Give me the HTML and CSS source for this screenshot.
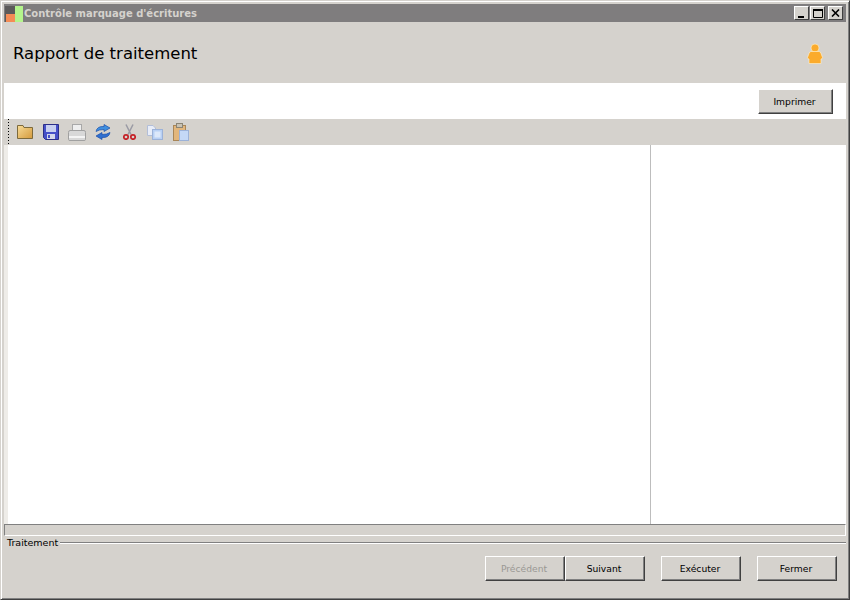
FILE: index.html
```html
<!DOCTYPE html>
<html lang="fr">
  <head>
    <meta charset="UTF-8" />
    <title>Contrôle marquage d'écritures</title>
    <link rel="stylesheet" href="styles.css">
  </head>
  <body>
    <div class="window">
      <div class="titlebar">
        <svg class="app_icon" width="18" height="16" viewBox="0 0 18 16">
          <rect x="0" y="0" width="18" height="16" fill="#5c5a5a" />
          <rect x="1" y="8" width="9" height="8" fill="#f58c55" />
          <rect x="10" y="0" width="8" height="16" fill="#b4f58c" />
        </svg>
        <span class="title_text">Contrôle marquage d'écritures</span>
        <div class="win_btns">
          <button class="win_btn"><svg width="9" height="9" viewBox="0 0 9 9"><rect x="1" y="7" width="6" height="2" fill="#000" /></svg></button>
          <button class="win_btn max"><svg width="10" height="9" viewBox="0 0 10 9"><path d="M0.5 1.5H9.5V8.5H0.5Z" fill="none" stroke="#000" /><rect x="0" y="0" width="10" height="2" fill="#000" /></svg></button>
          <button class="win_btn close"><svg width="9" height="8" viewBox="0 0 9 8"><path d="M1 0.5L8 7.5M8 0.5L1 7.5" fill="none" stroke="#000" stroke-width="1.6" /></svg></button>
        </div>
      </div>

      <div class="header">
        <h1 class="heading">Rapport de traitement</h1>
        <svg class="person" width="18" height="22" viewBox="0 0 18 22">
          <circle cx="9" cy="5" r="4" fill="#fbab2c" stroke="#fff3d0" stroke-width="0.6" />
          <path d="M5 8.5H13Q14.5 8.5 15 10.5L16.5 14.5Q16.5 16 15 16V20.5H3V16Q1.5 16 1.5 14.5L3 10.5Q3.5 8.5 5 8.5Z" fill="#fbab2c" stroke="#fff3d0" stroke-width="0.6" />
        </svg>
      </div>

      <div class="print_bar">
        <button class="btn print">Imprimer</button>
      </div>

      <div class="toolbar">
        <span class="grip"></span>
        <span class="tool">
          <svg width="16" height="14" viewBox="0 0 16 14">
            <defs>
              <linearGradient id="folderFill" x1="0" y1="0" x2="1" y2="1">
                <stop offset="0" stop-color="#f8dc98" />
                <stop offset="1" stop-color="#d49a3c" />
              </linearGradient>
            </defs>
            <path d="M0.5 0.5H6L7 2.5H15.5V13.5H0.5Z" fill="url(#folderFill)" stroke="#7d6a3c" />
          </svg>
        </span>
        <span class="tool">
          <svg width="16" height="16" viewBox="0 0 16 16">
            <path d="M0.5 0.5H15.5V15.5H2.5L0.5 13.5Z" fill="#4650c8" stroke="#2c2f88" />
            <rect x="3" y="1" width="10" height="7" fill="#c8d0f0" />
            <rect x="4" y="10" width="8" height="5" fill="#d4d8ea" />
            <rect x="5" y="11" width="2" height="3" fill="#4650c8" />
          </svg>
        </span>
        <span class="tool">
          <svg width="18" height="17" viewBox="0 0 18 17">
            <rect x="4.5" y="0.5" width="9" height="6" fill="#eeeeee" stroke="#a8a8a8" />
            <path d="M2 6.5H16Q17.5 6.5 17.5 8.5V15.5Q17.5 16.5 16 16.500H2Q0.5 16.5 0.5 15.5V8.5Q0.5 6.5 2 6.5Z" fill="#d8d8d8" stroke="#a0a0a0" />
            <rect x="1" y="12" width="16" height="2" fill="#f4f4f4" />
          </svg>
        </span>
        <span class="tool">
          <svg width="18" height="16" viewBox="0 0 18 16">
            <path d="M2 7.5Q3 2 10 2.5V0.5L16 4L10 7.5V5.5Q5 5.5 2 7.5Z" fill="#3f8fe0" stroke="#1d4fa8" stroke-width="0.7" />
            <path d="M16 8.5Q15 14 8 13.5V15.5L2 12L8 8.5V10.5Q13 10.5 16 8.5Z" fill="#2f6fd0" stroke="#1d4fa8" stroke-width="0.7" />
          </svg>
        </span>
        <span class="tool">
          <svg width="13" height="16" viewBox="0 0 13 16">
            <path d="M3 0.5L8 10.5M10 0.5L5 10.5" fill="none" stroke="#9a9aa4" stroke-width="1.5" />
            <circle cx="3" cy="13" r="2.2" fill="none" stroke="#c42026" stroke-width="1.7" />
            <circle cx="10" cy="13" r="2.2" fill="none" stroke="#c42026" stroke-width="1.7" />
          </svg>
        </span>
        <span class="tool">
          <svg width="16" height="15" viewBox="0 0 16 15">
            <path d="M0.5 0.5H6L8.5 3V10.5H0.5Z" fill="#e8edf8" stroke="#b2bed8" />
            <rect x="5.5" y="4.5" width="10" height="10" fill="#b8d0f4" stroke="#9cb2d8" />
            <rect x="7.5" y="6.5" width="6" height="6" fill="#dce8fa" />
          </svg>
        </span>
        <span class="tool">
          <svg width="16" height="18" viewBox="0 0 16 18">
            <rect x="0.5" y="2.5" width="12" height="15" fill="#e2b67c" stroke="#a88658" />
            <rect x="3.5" y="0.5" width="6" height="4" fill="#c8c2b4" stroke="#8a8474" />
            <rect x="6.5" y="7.5" width="9" height="10" fill="#c4d8f6" stroke="#9cb2d8" />
          </svg>
        </span>
      </div>

      <div class="content">
        <div class="left_strip"></div>
        <div class="main_pane"></div>
        <div class="side_pane"></div>
      </div>

      <div class="status"></div>

      <div class="group">
        <div class="legend">
          <span>Traitement</span>
          <span class="legend_line"></span>
        </div>
        <div class="actions">
          <div class="btn_pair">
            <button class="btn" disabled>Précédent</button>
            <button class="btn">Suivant</button>
          </div>
          <button class="btn">Exécuter</button>
          <button class="btn">Fermer</button>
        </div>
      </div>
    </div>
  </body>
</html>
```

FILE: styles.css
```css
* {
  margin: 0;
  padding: 0;
  box-sizing: border-box;
}

body {
  width: 850px;
  height: 600px;
  overflow: hidden;
  background-color: #d5d2cd;
  font-family: "DejaVu Sans", Verdana, sans-serif;
  font-size: 9.5px;
  color: #000;
}

.window {
  display: flex;
  flex-direction: column;
  width: 850px;
  height: 600px;
  padding: 3px 3px 0 3px;
  border-top: 1px solid #d5d2cd;
  border-left: 1px solid #d5d2cd;
  border-right: 1px solid #404040;
  border-bottom: 1px solid #404040;
  box-shadow: inset 1px 1px 0 #fff, inset -1px -1px 0 #808080;
}

.titlebar {
  display: flex;
  align-items: center;
  flex: 0 0 18px;
  background-color: #7f7d7e;
}

.app_icon {
  margin: 1px 1px 0 1px;
}

.title_text {
  font-size: 10px;
  font-weight: bold;
  color: #d5d2cd;
}

.win_btns {
  display: flex;
  margin-left: auto;
  margin-right: 3px;
}

.win_btn {
  display: flex;
  align-items: center;
  justify-content: center;
  width: 15px;
  height: 14px;
  background-color: #d5d2cd;
  border: 1px solid;
  border-color: #fff #404040 #404040 #fff;
}

.win_btn.max {
  margin-left: 1px;
}

.win_btn.close {
  margin-left: 3px;
}

.header {
  display: flex;
  align-items: center;
  justify-content: space-between;
  flex: 0 0 61px;
  padding: 2px 22px 0 9px;
}

.heading {
  font-size: 16.5px;
  font-weight: normal;
}

.print_bar {
  display: flex;
  justify-content: flex-end;
  flex: 0 0 36px;
  padding: 6px 13px 0 0;
  background-color: #fff;
}

.btn {
  width: 80px;
  height: 25px;
  padding-right: 2px;
  background-color: #d5d2cd;
  border: 1px solid;
  border-color: #fff #404040 #404040 #fff;
  box-shadow: inset -1px -1px 0 #808080;
  font-family: "DejaVu Sans", Verdana, sans-serif;
  font-size: 9.2px;
  color: #000;
}

.btn:disabled {
  color: #9a9894;
}

.btn.print {
  width: 75px;
}

.toolbar {
  display: flex;
  align-items: center;
  flex: 0 0 26px;
  padding-left: 4px;
  background-color: #d5d2cd;
}

.grip {
  align-self: stretch;
  width: 1px;
  margin-right: 3px;
  background-image: repeating-linear-gradient(#000 0 1px, transparent 1px 3px);
}

.tool {
  display: flex;
  align-items: center;
  justify-content: center;
  width: 26px;
}

.content {
  display: flex;
  flex: 0 0 379px;
  background-color: #fff;
}

.left_strip {
  flex: 0 0 4px;
  background-color: #eeece8;
}

.main_pane {
  flex: 0 0 643px;
  border-right: 1px solid #bdbdbd;
}

.side_pane {
  flex: 1;
}

.status {
  flex: 0 0 12px;
  background-color: #d5d2cd;
  border: 1px solid;
  border-color: #808080 #fff #fff #808080;
}

.legend {
  display: flex;
  align-items: center;
  gap: 2px;
  height: 13px;
  padding-left: 3px;
}

.legend_line {
  flex: 1;
  height: 2px;
  background-color: #808080;
  border-bottom: 1px solid #fff;
}

.actions {
  display: flex;
  justify-content: flex-end;
  gap: 16px;
  margin-top: 7px;
  padding-right: 9px;
}

.btn_pair {
  display: flex;
}
```
